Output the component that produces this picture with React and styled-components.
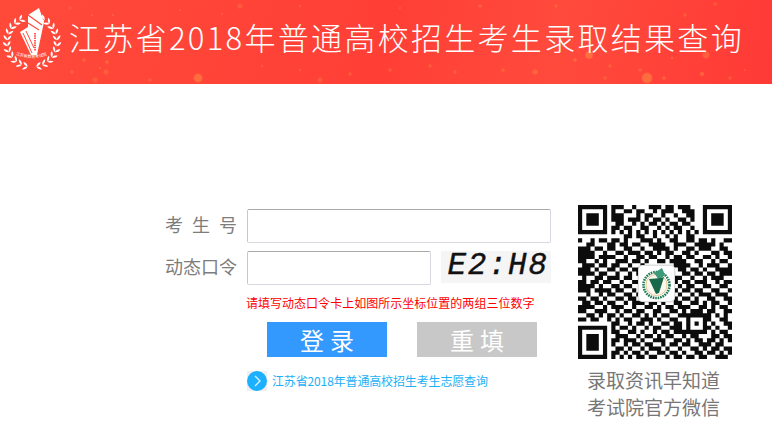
import React from 'react';
import styled, { createGlobalStyle } from 'styled-components';

const Global = createGlobalStyle`
  html, body { margin: 0; padding: 0; background: #fff; }
  body { font-family: "Noto Sans CJK SC", "Liberation Sans", sans-serif; }
`;

const sparkles = [
  [70,8,2,.18],[92,15,1.5,.2],[240,6,3,.2],[222,14,1.5,.2],[180,10,1.5,.18],[113,15,1.5,.2],[84,60,2,.25],[106,72,3,.22],
  [107,62,2,.3],[100,68,1.5,.22],[198,78,5,.4],[150,80,2,.22],[72,72,2,.22],[95,80,3,.22],[262,66,1.5,.22],[300,70,1.5,.22],
  [589,55,4.5,.4],[535,72,3,.3],[503,70,2,.25],[647,78,6,.4],[664,78,2,.3],[702,74,2.5,.3],[672,58,1.5,.3],[706,55,4,.3],
  [605,78,2,.22],[575,60,2,.3],[610,66,2,.22],[640,70,2,.22],[730,78,2,.22],[745,70,1.5,.22],[740,30,1.5,.22],[556,6,2,.22],
  [455,72,2,.22],[430,66,2,.22],[390,70,2,.22],[350,74,2,.22],[320,80,3,.22],[715,4,2,.22],[685,15,2,.22],[300,6,1.5,.22],[400,8,1.5,.22],[480,6,2,.22],
];
const sparkleBg = sparkles
  .map(([x, y, r, a]) => `radial-gradient(circle ${r}px at ${x}px ${y}px, rgba(255,170,70,${a}) 70%, rgba(255,170,70,0) 100%)`)
  .join(',');

const Header = styled.header`
  height: 84px;
  display: flex;
  align-items: center;
  background: ${sparkleBg}, linear-gradient(100deg, #ff4a3a 0%, #ff3f36 50%, #ff4a3c 72%, #ff3a36 100%);
`;
const LogoWrap = styled.div`
  width: 62px;
  height: 70px;
  margin-left: 1px;
  margin-top: -6px;
  flex: none;
`;
const Title = styled.h1`
  margin: -11px 0 0 6px;
  color: #fff;
  font-size: 31px;
  line-height: 40px;
  font-weight: 300;
  letter-spacing: 2.3px;
  white-space: nowrap;
`;
const Main = styled.main`
  display: flex;
  align-items: flex-start;
  padding: 121px 0 0 165px;
`;
const FormCol = styled.div`
  width: 386px;
  padding-top: 4px;
`;
const Row = styled.div`
  display: flex;
  align-items: center;
  gap: 10px;
  height: 34px;
  margin-bottom: 8px;
`;
const Label = styled.label`
  width: 72px;
  flex: none;
  font-size: 18px;
  line-height: 24px;
  margin-bottom: 4px;
  color: #7d7d7d;
  white-space: nowrap;
  letter-spacing: ${p => p.$spread || '0'};
`;
const Input = styled.input`
  box-sizing: border-box;
  height: 34px;
  width: ${p => p.$w}px;
  border: 1px solid #d6d9e2;
  border-top-color: #a9a9a9;
  border-left-color: #c8c8cc;
  border-radius: 2px;
  padding: 0 6px;
  background: #fff;
  outline: none;
`;
const Captcha = styled.div`
  width: 110px;
  height: 32px;
  background: #f5f5f5;
  color: #111;
  font-family: "Liberation Mono", monospace;
  font-style: italic;
  font-size: 31px;
  line-height: 29px;
  letter-spacing: 1.6px;
  text-align: center;
  text-indent: 4px;
  white-space: nowrap;
  -webkit-text-stroke: 0.4px #111;
  align-self: flex-start;
`;
const Hint = styled.p`
  margin: 0 0 0 81px;
  color: #f00;
  font-size: 12px;
  line-height: 20px;
  letter-spacing: 0.02px;
  white-space: nowrap;
`;
const Buttons = styled.div`
  display: flex;
  gap: 30px;
  margin: 9px 0 0 102px;
`;
const Button = styled.button`
  width: 120px;
  height: 35px;
  border: 0;
  padding: 0;
  background: ${p => p.$bg};
  color: #fff;
  font-family: inherit;
  font-size: 24px;
  line-height: 35px;
  font-weight: 400;
  letter-spacing: 6px;
  text-indent: 6px;
`;
const LinkRow = styled.a`
  display: flex;
  align-items: center;
  gap: 5px;
  margin: 14px 0 0 82px;
  color: #1cb0f6;
  font-size: 12px;
  line-height: 20px;
  letter-spacing: -0.14px;
  white-space: nowrap;
  text-decoration: none;
`;
const QrCol = styled.aside`
  margin-left: 27px;
  width: 154px;
  display: flex;
  flex-direction: column;
  align-items: center;
`;
const QrBox = styled.div`
  position: relative;
  width: 154px;
  height: 154px;
  filter: blur(0.35px);
`;
const QrLogo = styled.div`
  position: absolute;
  left: 60px;
  top: 60px;
  width: 37px;
  height: 37px;
  box-sizing: border-box;
  background: #fff;
  border: 1px solid #ddd;
  border-radius: 4px;
  box-shadow: 0 0 2px rgba(0,0,0,.25);
`;
const Caption = styled.p`
  margin: 7px 3px 0 0;
  color: #777;
  font-size: 19px;
  line-height: 27px;
  text-align: center;
  white-space: nowrap;
`;

const qrRows = [
  '1111111011100100011101101110001111111',
  '1000001010011011001011100111001000001',
  '1011101011100010110010010011001011101',
  '1011101011101110101101001101001011101',
  '1011101001100101011010110110001011101',
  '1000001011011001100101011001001000001',
  '1111111010101010101010101010101111111',
  '0000000000011011001001010011000000000',
  '1001011011010001110100110011011010011',
  '0011000110110110011110011100111110100',
  '1110110110011001001111010011011100110',
  '1111001001101110110101100110100011011',
  '1111011110010011011001011011001101001',
  '1100101001110110100110111100110010110',
  '0111011011001001000000011110010111001',
  '1110100110110110000000001101101001111',
  '1111011001001011000000000110110110111',
  '0100110111011001000000011001001011100',
  '1101101100100110000000010110111001011',
  '1111010011011001000000001011001100110',
  '1110111101100101000000010110110011001',
  '0010010110011011000000001001011101110',
  '1101101001101100100101110110100110011',
  '0110110110010111011010011001101011001',
  '1111001011100100110101101110011010110',
  '1100111001011011001100110101110110011',
  '0011010110100110101011001111111101010',
  '1101100101011001110100110010001100110',
  '0000000011001011010011011010101010011',
  '1111111010110100101100111010001101001',
  '1000001011001101001011011111111010110',
  '1011101001110010110101100101100011011',
  '1011101011011101001110011010110110101',
  '1011101010010110110010110110011101100',
  '1011101001101001011101001001101011011',
  '1000001011010110100110110100110110101',
  '1111111010101011011001011011011001110',
];

const QrCode = () => (
  <svg width="154" height="154" viewBox="0 0 37 37" role="img" aria-label="QR">
    <path
      fill="#0c0c0c"
      d={qrRows.flatMap((row, y) =>
        [...row].map((c, x) => (c === '1' ? `M${x} ${y}h1v1h-1z` : ''))
      ).join('')}
    />
  </svg>
);

const QrEmblem = () => (
  <svg width="35" height="35" viewBox="0 0 35 35">
    <circle cx="17.5" cy="19" r="13" fill="none" stroke="#1f7a55" strokeWidth="2.6" strokeDasharray="1.6 0.9" />
    <circle cx="17.5" cy="19" r="10.6" fill="#fdf8ee" stroke="#d8b878" strokeWidth=".8" />
    <path d="M15 7l8-5 3 7-6 5z" fill="#3d9a78" />
    <path d="M10 13l12-1 3-1 -5 16 -3 1z" fill="#17694a" />
  </svg>
);

const angles = Array.from({ length: 11 }, (_, i) => -60 + i * 14);

const Logo = () => (
  <svg width="62" height="70" viewBox="0 0 62 70">
    <defs>
      <path id="lg-arc" d="M11 49 Q31 59 51 49" />
    </defs>
    <g fill="#fff">
      {angles.map(deg => {
        const a = deg * Math.PI / 180;
        return [-1, 1].map(s => {
          const x = 31 + s * 25 * Math.cos(a);
          const y = 38 + 25 * Math.sin(a);
          return (
            <g key={`${deg}${s}`} transform={`translate(${x} ${y}) rotate(${s * deg})`}>
              <path d="M0 0 C-3 -1 -3.8 -3 -3.8 -5 C-1.6 -4.2 0 -2.4 0 0z" />
              <path d="M0 0 C3 -1 3.8 -3 3.8 -5 C1.6 -4.2 0 -2.4 0 0z" />
            </g>
          );
        });
      })}
      <path d="M19 28 L30 51 L36 51 L43 18 L38 4 L27 11 L27 23z" />
    </g>
    <path d="M22 29 L31 49 M25 27 L33 44" stroke="#ff4a3a" strokeWidth="1" />
    <path d="M27 11 L41 21 M27 19 L38 26" stroke="#ff4a3a" strokeWidth="1.2" />
    <path d="M34 29 V47" stroke="#ff4a3a" strokeWidth="1.8" strokeDasharray="1.5 .8" />
    <text fontSize="4" fill="#fff" fontFamily="Noto Sans CJK SC, sans-serif">
      <textPath href="#lg-arc" startOffset="4">江苏省教育考试院</textPath>
    </text>
  </svg>
);

const ArrowIcon = () => (
  <svg width="20" height="20" viewBox="0 0 20 20" style={{ flex: 'none' }}>
    <rect width="20" height="20" fill="#efefef" />
    <circle cx="10" cy="10" r="10" fill="#1cb0ff" />
    <path d="M8 5l5 5-5 5" fill="none" stroke="#d9f2ff" strokeWidth="1.4" />
  </svg>
);

export default function App() {
  return (
    <>
      <Global />
      <Header>
        <LogoWrap><Logo /></LogoWrap>
        <Title>江苏省2018年普通高校招生考生录取结果查询</Title>
      </Header>
      <Main>
        <FormCol>
          <Row>
            <Label $spread="9px">考生号</Label>
            <Input $w={304} />
          </Row>
          <Row>
            <Label>动态口令</Label>
            <Input $w={184} />
            <Captcha>E2:H8</Captcha>
          </Row>
          <Hint>请填写动态口令卡上如图所示坐标位置的两组三位数字</Hint>
          <Buttons>
            <Button $bg="#3399ff">登录</Button>
            <Button $bg="#c8c8c8">重填</Button>
          </Buttons>
          <LinkRow href="#">
            <ArrowIcon />
            <span>江苏省2018年普通高校招生考生志愿查询</span>
          </LinkRow>
        </FormCol>
        <QrCol>
          <QrBox>
            <QrCode />
            <QrLogo><QrEmblem /></QrLogo>
          </QrBox>
          <Caption>录取资讯早知道<br />考试院官方微信</Caption>
        </QrCol>
      </Main>
    </>
  );
}
